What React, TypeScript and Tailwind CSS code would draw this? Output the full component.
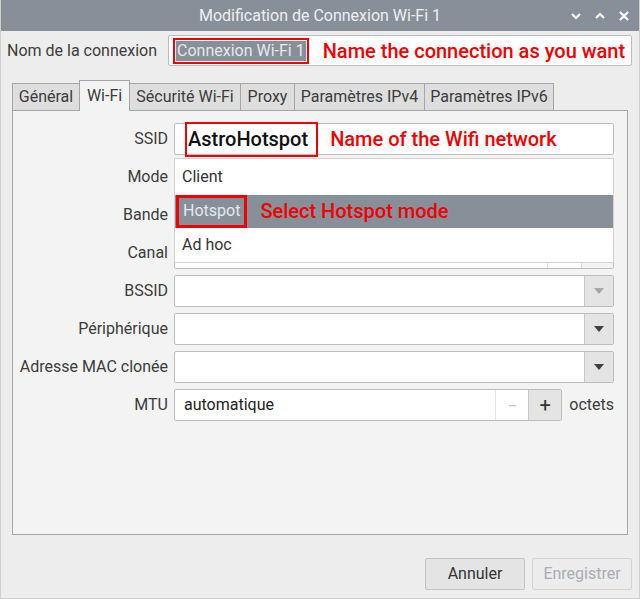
import React from "react";

const labelCls = "w-[155px] shrink-0 text-right text-[16px] text-[#3c3c3c]";
const noteCls = "font-['Roboto',sans-serif] font-medium text-[20px] text-[#f00000] whitespace-nowrap";

const Caret = ({ disabled }: { disabled?: boolean }) => (
  <svg width="10" height="6" viewBox="0 0 10 6">
    <path d="M0 0 L10 0 L5 6 Z" fill={disabled ? "#a6a6a6" : "#404040"} />
  </svg>
);

const ComboField = ({ label, disabled }: { label: string; disabled?: boolean }) => (
  <div className="flex items-center h-[32px] gap-[6px]">
    <div className={labelCls}>{label}</div>
    <div className="flex-1 h-full flex border border-[#bdbdbd] rounded-[2px] bg-white overflow-hidden">
      <div className="flex-1" />
      <div className="w-[29px] flex items-center justify-center bg-[#e4e4e4] border-l border-[#c8c8c8]">
        <Caret disabled={disabled} />
      </div>
    </div>
  </div>
);

const tabs = [
  { name: "Général", w: "w-[68px]" },
  { name: "Wi-Fi", w: "w-[51px]" },
  { name: "Sécurité Wi-Fi", w: "w-[112px]" },
  { name: "Proxy", w: "w-[55px]" },
  { name: "Paramètres IPv4", w: "w-[131px]" },
  { name: "Paramètres IPv6", w: "w-[130px]" },
];

export default function App() {
  return (
    <div className="w-[640px] h-[599px] bg-[#ededed] flex flex-col font-['Roboto',sans-serif] border-x border-b border-[#cfcfcf] overflow-hidden">
      {/* title bar */}
      <div className="h-[31px] shrink-0 bg-[#878f99] flex items-center relative">
        <div className="flex-1 text-center text-[16px] text-[#eef0f2]">
          Modification de Connexion Wi-Fi 1
        </div>
        <div className="absolute right-[10px] top-0 h-full flex items-center gap-[14px]">
          <svg width="10" height="8" viewBox="0 0 10 8">
            <path d="M1 2 L5 6 L9 2" stroke="#ffffff" strokeWidth="2.2" fill="none" />
          </svg>
          <svg width="10" height="8" viewBox="0 0 10 8">
            <path d="M1 6 L5 2 L9 6" stroke="#ffffff" strokeWidth="2.2" fill="none" />
          </svg>
          <svg width="10" height="10" viewBox="0 0 10 10">
            <path d="M1 1 L9 9 M9 1 L1 9" stroke="#ffffff" strokeWidth="2.2" fill="none" />
          </svg>
        </div>
      </div>

      {/* connection name */}
      <div className="flex items-center mt-[4px] pl-[6px] pr-[7px] h-[31px]">
        <div className="w-[161px] shrink-0 text-[16px] text-[#3c3c3c]">Nom de la connexion</div>
        <div className="flex-1 h-full flex items-center border border-[#bdbdbd] rounded-[2px] bg-white pl-[4px]">
          <div className="h-[26px] flex items-center border-2 border-[#f00000] px-[1px]">
            <span className="bg-[#878f99] text-[#e6e8ea] text-[16px] leading-[20px] px-[1px]">
              Connexion Wi-Fi 1
            </span>
          </div>
          <span className={`${noteCls} ml-[14px]`}>Name the connection as you want</span>
        </div>
      </div>

      {/* tabs */}
      <div className="flex items-end mt-[14px] ml-[11px] h-[30px] relative z-10">
        {tabs.map((t, i) =>
          i === 1 ? (
            <div
              key={t.name}
              className={`${t.w} h-[31px] -mb-px -ml-px flex items-center justify-center bg-[#f3f3f3] border border-b-0 border-[#a6a6a6] text-[16px] text-[#3c3c3c]`}
            >
              {t.name}
            </div>
          ) : (
            <div
              key={t.name}
              className={`${t.w} h-[27px] ${i === 0 ? "" : "-ml-px"} flex items-center justify-center bg-[#dedede] border border-b-0 border-[#a6a6a6] text-[16px] text-[#3c3c3c]`}
            >
              {t.name}
            </div>
          )
        )}
      </div>

      {/* notebook page */}
      <div className="flex-1 mx-[11px] border border-[#a6a6a6] bg-[#f3f3f3] pt-[12px] pr-[13px] relative">
        <div className="flex flex-col gap-[6px]">
          {/* SSID */}
          <div className="flex items-center h-[32px] gap-[6px]">
            <div className={labelCls}>SSID</div>
            <div className="flex-1 h-full flex items-center border border-[#bdbdbd] rounded-[2px] bg-white pl-[10px] relative">
              <div className="absolute left-[10px] -top-[2px] w-[133px] h-[35px] border-2 border-[#f00000]" />
              <span className="font-medium text-[20px] text-[#111] pl-[3px]">AstroHotspot</span>
              <span className={`${noteCls} ml-[22px]`}>Name of the Wifi network</span>
            </div>
          </div>
          <ComboField label="Mode" />
          <ComboField label="Bande" />
          {/* Canal */}
          <div className="flex items-center h-[32px] gap-[6px]">
            <div className={labelCls}>Canal</div>
            <div className="flex-1 h-full flex border border-[#bdbdbd] rounded-[2px] bg-white overflow-hidden">
              <div className="flex-1" />
              <div className="w-[34px] border-l border-[#dcdcdc]" />
              <div className="w-[32px] border-l border-[#dcdcdc] bg-[#f3f3f3]" />
            </div>
          </div>
          <ComboField label="BSSID" disabled />
          <ComboField label="Périphérique" />
          <ComboField label="Adresse MAC clonée" />
          {/* MTU */}
          <div className="flex items-center h-[32px] gap-[6px]">
            <div className={labelCls}>MTU</div>
            <div className="w-[390px] h-full flex border border-[#bdbdbd] rounded-[2px] bg-white overflow-hidden">
              <div className="flex-1 flex items-center pl-[9px] text-[16px] text-[#222]">automatique</div>
              <div className="w-[33px] flex items-center justify-center border-l border-[#e4e4e4] text-[18px] text-[#c8c8c8]">−</div>
              <div className="w-[33px] flex items-center justify-center border-l border-[#c8c8c8] bg-[#e4e4e4] text-[20px] text-[#333]">+</div>
            </div>
            <div className="text-[16px] text-[#3c3c3c] ml-[1px]">octets</div>
          </div>
        </div>

        {/* open mode popup */}
        <div className="absolute left-[161px] top-[47px] w-[440px] h-[105px] bg-white border border-[#d2d2d2] flex flex-col text-[16px] text-[#333] z-20">
          <div className="h-[36px] flex items-center pl-[7px]">Client</div>
          <div className="h-[34px] flex items-center bg-[#878f99] pl-[1px]">
            <div className="h-[33px] flex items-center border-[3px] border-[#f00000] px-[4px] text-[#e6e8ea]">
              Hotspot
            </div>
            <span className={`${noteCls} ml-[13px]`}>Select Hotspot mode</span>
          </div>
          <div className="h-[34px] flex items-center pl-[7px]">Ad hoc</div>
        </div>
      </div>

      {/* buttons */}
      <div className="flex justify-end gap-[7px] mt-[23px] mb-[8px] pr-[7px]">
        <button className="w-[100px] h-[32px] bg-[#e4e4e4] border border-[#c4c4c4] rounded-[2px] text-[16px] text-[#333]">
          Annuler
        </button>
        <button className="w-[100px] h-[32px] bg-[#ececec] border border-[#d4d4d4] rounded-[2px] text-[16px] text-[#a9adb3]">
          Enregistrer
        </button>
      </div>
    </div>
  );
}
